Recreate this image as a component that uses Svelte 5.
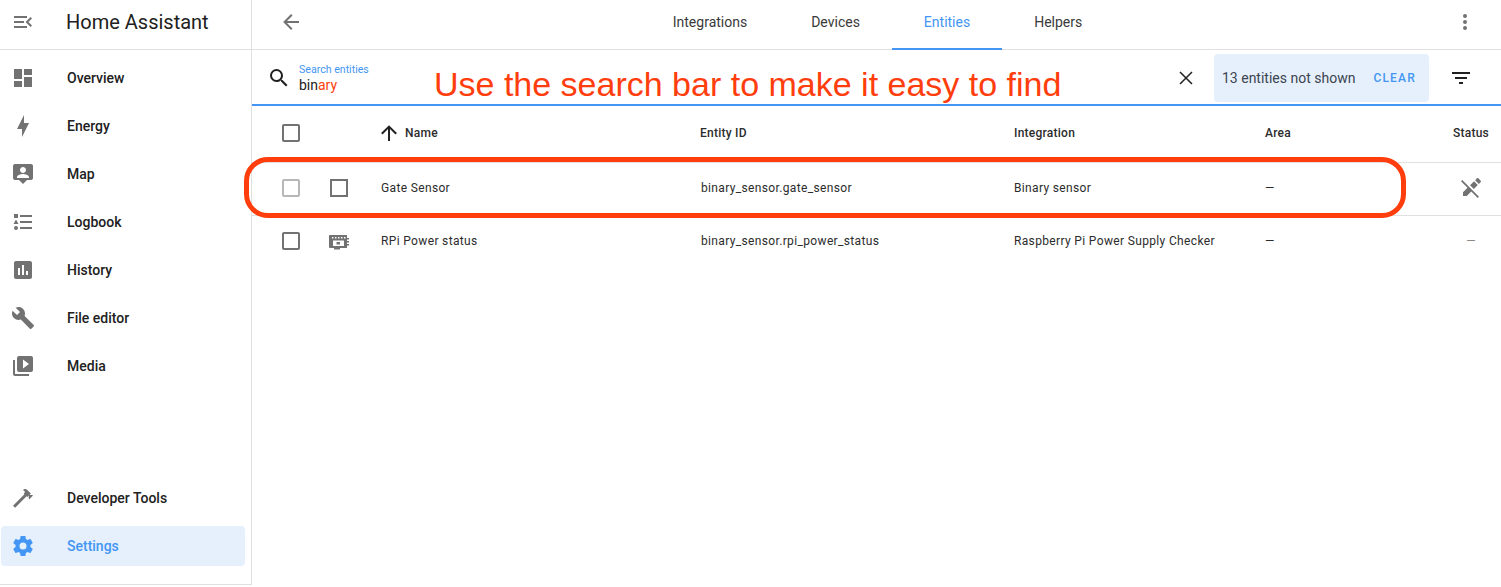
<script lang="ts">
	const p = {
		menu: 'M21,15.61L19.59,17L14.58,12L19.59,7L21,8.39L17.44,12L21,15.61M3,6H16V8H3V6M3,13V11H13V13H3M3,18V16H16V18H3Z',
		dashboard: 'M13,3V9H21V3M13,21H21V11H13M3,21H11V15H3M3,13H11V3H3V13Z',
		bolt: 'M11 15H6L13 1V9H18L11 23V15Z',
		map: 'M20 2H4C2.9 2 2 2.9 2 4V16C2 17.1 2.9 18 4 18H8L12 22L16 18H20C21.1 18 22 17.1 22 16V4C22 2.9 21.1 2 20 2M12 5C13.66 5 15 6.34 15 8S13.66 11 12 11 9 9.66 9 8 10.34 5 12 5M18 16H6V15C6 13 10 11.9 12 11.9S18 13 18 15V16Z',
		logbook: 'M5,9.5L7.5,14H2.5L5,9.5M3,4H7V8H3V4M5,20A2,2 0 0,0 7,18A2,2 0 0,0 5,16A2,2 0 0,0 3,18A2,2 0 0,0 5,20M9,5V7H21V5H9M9,19H21V17H9V19M9,13H21V11H9V13Z',
		history: 'M19 3H5C3.89 3 3 3.89 3 5V19C3 20.1 3.9 21 5 21H19C20.1 21 21 20.1 21 19V5C21 3.89 20.1 3 19 3M9 17H7V10H9V17M13 17H11V7H13V17M17 17H15V13H17V17Z',
		wrench: 'M22.7,19L13.6,9.9C14.5,7.6 14,4.9 12.1,3C10.1,1 7.1,0.6 4.7,1.7L9,6L6,9L1.6,4.7C0.4,7.1 0.9,10.1 2.9,12.1C4.8,14 7.5,14.5 9.8,13.6L18.9,22.7C19.3,23.1 19.9,23.1 20.3,22.7L22.6,20.4C23.1,20 23.1,19.3 22.7,19Z',
		media: 'M4,6H2V20A2,2 0 0,0 4,22H18V20H4M20,2H8A2,2 0 0,0 6,4V16A2,2 0 0,0 8,18H20A2,2 0 0,0 22,16V4A2,2 0 0,0 20,2M12,14.5V5.5L18,10L12,14.5Z',
		hammer: 'M2 19.63L13.43 8.2L12.72 7.5L14.14 6.07L12 3.89C13.2 2.7 15.09 2.7 16.27 3.89L19.87 7.5L18.45 8.91H21.29L22 9.62L18.45 13.21L17.74 12.5V9.62L16.27 11.04L15.56 10.33L4.13 21.76L2 19.63Z',
		cog: 'M12,15.5A3.5,3.5 0 0,1 8.5,12A3.5,3.5 0 0,1 12,8.5A3.5,3.5 0 0,1 15.5,12A3.5,3.5 0 0,1 12,15.5M19.43,12.97C19.47,12.65 19.5,12.33 19.5,12C19.5,11.67 19.47,11.34 19.43,11L21.54,9.37C21.73,9.22 21.78,8.95 21.66,8.73L19.66,5.27C19.54,5.05 19.27,4.96 19.05,5.05L16.56,6.05C16.04,5.66 15.5,5.32 14.87,5.07L14.5,2.42C14.46,2.18 14.25,2 14,2H10C9.75,2 9.54,2.18 9.5,2.42L9.13,5.07C8.5,5.32 7.96,5.66 7.44,6.05L4.95,5.05C4.73,4.96 4.46,5.05 4.34,5.27L2.34,8.73C2.21,8.95 2.27,9.22 2.46,9.37L4.57,11C4.53,11.34 4.5,11.67 4.5,12C4.5,12.33 4.53,12.65 4.57,12.97L2.46,14.63C2.27,14.78 2.21,15.05 2.34,15.27L4.34,18.73C4.46,18.95 4.73,19.03 4.95,18.95L7.44,17.94C7.96,18.34 8.5,18.68 9.13,18.93L9.5,21.58C9.54,21.82 9.75,22 10,22H14C14.25,22 14.46,21.82 14.5,21.58L14.87,18.93C15.5,18.67 16.04,18.34 16.56,17.94L19.05,18.95C19.27,19.03 19.54,18.95 19.66,18.73L21.66,15.27C21.78,15.05 21.73,14.78 21.54,14.63L19.43,12.97Z',
		back: 'M20,11V13H8L13.5,18.5L12.08,19.92L4.16,12L12.08,4.08L13.5,5.5L8,11H20Z',
		dots: 'M12,16A2,2 0 0,1 14,18A2,2 0 0,1 12,20A2,2 0 0,1 10,18A2,2 0 0,1 12,16M12,10A2,2 0 0,1 14,12A2,2 0 0,1 12,14A2,2 0 0,1 10,12A2,2 0 0,1 12,10M12,4A2,2 0 0,1 14,6A2,2 0 0,1 12,8A2,2 0 0,1 10,6A2,2 0 0,1 12,4Z',
		search: 'M9.5,3A6.5,6.5 0 0,1 16,9.5C16,11.11 15.41,12.59 14.44,13.73L14.71,14H15.5L20.5,19L19,20.5L14,15.5V14.71L13.73,14.44C12.59,15.41 11.11,16 9.5,16A6.5,6.5 0 0,1 3,9.5A6.5,6.5 0 0,1 9.5,3M9.5,5C7,5 5,7 5,9.5C5,12 7,14 9.5,14C12,14 14,12 14,9.5C14,7 12,5 9.5,5Z',
		filter: 'M6,13H18V11H6M3,6V8H21V6M10,18H14V16H10V18Z',
		up: 'M13,20H11V8L5.5,13.5L4.08,12.08L12,4.16L19.92,12.08L18.5,13.5L13,8V20Z',
		check: 'M19,3H5C3.89,3 3,3.89 3,5V19A2,2 0 0,0 5,21H19A2,2 0 0,0 21,19V5C21,3.89 20.1,3 19,3M19,5V19H5V5H19Z',
		square: 'M3,3V21H21V3H3M5,5H19V19H5V5Z',
		pencilOff: 'M18.66,2C18.4,2 18.16,2.09 17.97,2.28L16.13,4.13L19.88,7.88L21.72,6.03C22.11,5.64 22.11,5 21.72,4.63L19.38,2.28C19.18,2.09 18.91,2 18.66,2M3.28,4L2,5.28L8.5,11.75L4,16.25V20H7.75L12.25,15.5L18.72,22L20,20.72L13.5,14.25L9.75,10.5L3.28,4M15.06,5.19L11.03,9.22L14.78,12.97L18.81,8.94L15.06,5.19Z',
		board: 'M3 6H20V9H22V10.5H20V12H22V13.5H20V15H22V16.5H20V19H13V20.5H7V19H3A1 1 0 0 1 2 18V7A1 1 0 0 1 3 6ZM5 8V9.5H6.5V8ZM8 8V9.5H9.5V8ZM11 8V9.5H12.5V8ZM14 8V9.5H15.5V8ZM17 8V9.5H18.5V8ZM6 11.5V17H17V11.5ZM9.5 13H13V15.5H9.5Z'
	};
	const main = [
		['Overview', p.dashboard],
		['Energy', p.bolt],
		['Map', p.map],
		['Logbook', p.logbook],
		['History', p.history],
		['File editor', p.wrench],
		['Media', p.media]
	];
	const tabs = ['Integrations', 'Devices', 'Entities', 'Helpers'];
</script>

<div class="app">
	<aside>
		<div class="brand">
			<svg class="ic" viewBox="0 0 24 24"><path d={p.menu} /></svg>
			<span>Home Assistant</span>
		</div>
		<nav>
			{#each main as [label, d]}
				<div class="item">
					<svg class="ic" viewBox="0 0 24 24"><path {d} /></svg>
					<span>{label}</span>
				</div>
			{/each}
		</nav>
		<div class="foot">
			<div class="item">
				<svg class="ic" viewBox="0 0 24 24"><path d={p.hammer} /></svg>
				<span>Developer Tools</span>
			</div>
			<div class="item active">
				<svg class="ic" viewBox="0 0 24 24"><path d={p.cog} /></svg>
				<span>Settings</span>
			</div>
		</div>
	</aside>

	<main>
		<header>
			<svg class="ic back" viewBox="0 0 24 24"><path d={p.back} /></svg>
			<div class="tabs">
				{#each tabs as t}
					<div class="tab" class:on={t === 'Entities'}>{t}</div>
				{/each}
			</div>
			<svg class="ic more" viewBox="0 0 24 24"><path d={p.dots} /></svg>
		</header>

		<div class="searchbar">
			<svg class="ic dark" viewBox="0 0 24 24"><path d={p.search} /></svg>
			<div class="field">
				<label>Search entities</label>
				<div class="val">bin<em>ary</em></div>
			</div>
			<svg class="clear" viewBox="0 0 24 24"><path d="M6 6L18 18M18 6L6 18" /></svg>
			<div class="hidden-note">
				<span>13 entities not shown</span>
				<b>CLEAR</b>
			</div>
			<svg class="ic dark filter" viewBox="0 0 24 24"><path d={p.filter} /></svg>
		</div>

		<div class="row head">
			<div class="c-check"><svg class="ic" viewBox="0 0 24 24"><path d={p.check} /></svg></div>
			<div class="c-name"><svg class="ic up" viewBox="0 0 24 24"><path d={p.up} /></svg>Name</div>
			<div class="c-id wide">Entity ID</div>
			<div class="c-int">Integration</div>
			<div class="c-area">Area</div>
			<div class="c-status">Status</div>
		</div>
		<div class="row line">
			<div class="c-check faded"><svg class="ic" viewBox="0 0 24 24"><path d={p.check} /></svg></div>
			<div class="c-icon"><svg class="ic" viewBox="0 0 24 24"><path d={p.square} /></svg></div>
			<div class="c-label">Gate Sensor</div>
			<div class="c-id">binary_sensor.gate_sensor</div>
			<div class="c-int">Binary sensor</div>
			<div class="c-area">—</div>
			<div class="c-status"><svg class="ic" viewBox="0 0 24 24"><path d={p.pencilOff} /></svg></div>
		</div>
		<div class="row line">
			<div class="c-check"><svg class="ic" viewBox="0 0 24 24"><path d={p.check} /></svg></div>
			<div class="c-icon"><svg class="ic" viewBox="0 0 24 24"><path fill-rule="evenodd" d={p.board} /></svg></div>
			<div class="c-label">RPi Power status</div>
			<div class="c-id">binary_sensor.rpi_power_status</div>
			<div class="c-int">Raspberry Pi Power Supply Checker</div>
			<div class="c-area">—</div>
			<div class="c-status muted">—</div>
		</div>
	</main>

	<div class="callout">Use the search bar to make it easy to find</div>
	<div class="ring"></div>
</div>

<style>
	:global(body) {
		margin: 0;
		background: #fff;
		font-family: Roboto, 'Liberation Sans', sans-serif;
		color: #212121;
	}
	.app {
		position: relative;
		display: flex;
		width: 1501px;
		height: 587px;
		overflow: hidden;
		-webkit-font-smoothing: antialiased;
	}
	.ic {
		width: 24px;
		height: 24px;
		flex: none;
		fill: #727272;
	}
	aside {
		width: 251px;
		height: 584px;
		flex: none;
		display: flex;
		flex-direction: column;
		border-right: 1px solid #e0e0e0;
		border-bottom: 1px solid #e0e0e0;
	}
	.brand {
		height: 50px;
		box-sizing: border-box;
		flex: none;
		display: flex;
		align-items: center;
		padding: 0 0 6px 11px;
		border-bottom: 1px solid #e0e0e0;
		font-size: 20px;
	}
	.brand span {
		margin-left: 31px;
	}
	nav {
		padding-top: 8px;
		flex: 1;
	}
	.item {
		height: 40px;
		margin: 0 6px 8px 1px;
		padding-left: 10px;
		display: flex;
		align-items: center;
		border-radius: 4px;
		font-size: 14px;
		font-weight: 500;
	}
	.item span {
		margin-left: 32px;
	}
	.foot {
		padding-bottom: 10px;
	}
	.item.active {
		background: #e6f0fc;
		color: #4396f3;
	}
	.item.active .ic {
		fill: #4396f3;
	}
	main {
		flex: 1;
		min-width: 0;
	}
	header {
		height: 49px;
		position: relative;
		display: flex;
		justify-content: center;
		border-bottom: 1px solid #e0e0e0;
	}
	.back {
		position: absolute;
		left: 27px;
		top: 10px;
	}
	.more {
		position: absolute;
		right: 24px;
		top: 10px;
	}
	.tabs {
		display: flex;
		margin-left: 2px;
	}
	.tab {
		padding: 0 32px 5px;
		display: flex;
		align-items: center;
		font-size: 14px;
		color: #3a3a3a;
	}
	.tab.on {
		color: #4396f3;
		border-bottom: 2px solid #4396f3;
		margin-bottom: -1px;
		padding-bottom: 4px;
	}
	.searchbar {
		height: 52px;
		display: flex;
		align-items: center;
		padding: 2px 0 0 15px;
		border-bottom: 2px solid #4396f3;
	}
	.dark {
		fill: #212121;
	}
	.field {
		margin-left: 8px;
		padding-top: 1px;
		flex: 1;
	}
	label {
		display: block;
		font-size: 10.6px;
		line-height: 12px;
		color: #4396f3;
	}
	.val {
		font-size: 14px;
		line-height: 18px;
	}
	.val em {
		font-style: normal;
		color: #ff3d0d;
	}
	.clear {
		width: 24px;
		height: 24px;
		flex: none;
		margin-right: 16px;
		fill: none;
		stroke: #212121;
		stroke-width: 1.5;
	}
	.hidden-note {
		width: 215px;
		height: 48px;
		box-sizing: border-box;
		padding: 0 13px 0 8px;
		display: flex;
		align-items: center;
		justify-content: space-between;
		background: #e6f0fc;
		border-radius: 4px;
		font-size: 14px;
		color: #3c4450;
	}
	.hidden-note b {
		font-size: 12px;
		font-weight: 500;
		letter-spacing: 1.2px;
		color: #4396f3;
	}
	.filter {
		margin: 0 28px 0 20px;
	}
	.row {
		display: flex;
		align-items: center;
		box-sizing: border-box;
		padding-bottom: 2px;
		font-size: 12px;
		letter-spacing: 0.35px;
		color: #2c2c2c;
	}
	.head {
		height: 56px;
		font-weight: 500;
		letter-spacing: 0.25px;
	}
	.line {
		height: 53px;
		border-top: 1px solid #e0e0e0;
	}
	.c-check {
		width: 48px;
		padding-left: 27px;
		display: flex;
	}
	.faded .ic {
		opacity: 0.5;
	}
	.c-icon {
		width: 24px;
		display: flex;
	}
	.c-name {
		width: 323px;
		margin-left: 50px;
		display: flex;
		align-items: center;
	}
	.up {
		fill: #212121;
		margin-right: 4px;
	}
	.c-label {
		width: 320px;
		margin-left: 30px;
	}
	.c-id {
		width: 313px;
	}
	.c-id.wide {
		width: 314px;
	}
	.c-int {
		width: 251px;
	}
	.c-area {
		flex: 1;
	}
	.c-status {
		width: 60px;
		display: flex;
		justify-content: center;
	}
	.muted {
		color: #888;
	}
	.callout {
		position: absolute;
		left: 434px;
		top: 64px;
		font-family: 'Liberation Sans', Arial, sans-serif;
		font-size: 34px;
		line-height: 40px;
		color: #ff3d0d;
		white-space: nowrap;
	}
	.ring {
		position: absolute;
		left: 244px;
		top: 157px;
		width: 1162px;
		height: 61px;
		box-sizing: border-box;
		border: 5px solid #ff3d0d;
		border-radius: 24px;
	}
</style>
